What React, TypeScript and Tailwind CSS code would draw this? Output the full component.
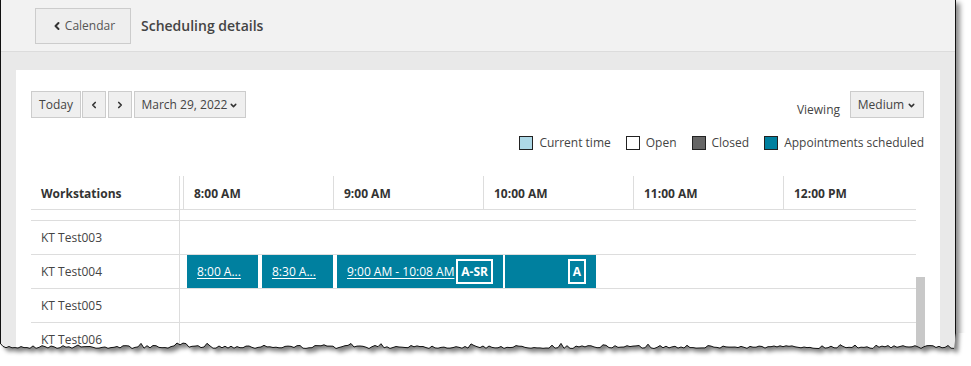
import { ChevronDown, ChevronLeft, ChevronRight } from "lucide-react";

const HOURS = ["8:00 AM", "9:00 AM", "10:00 AM", "11:00 AM", "12:00 PM"];

const LEGEND = [
  { label: "Current time", swatch: "bg-[#add8e6]" },
  { label: "Open", swatch: "bg-white" },
  { label: "Closed", swatch: "bg-[#666666]" },
  { label: "Appointments scheduled", swatch: "bg-[#00809f]" },
];

// jagged paper edge, seeded so it is the same every render
function tornPath() {
  let seed = 7;
  const rnd = () => {
    seed = (seed * 16807) % 2147483647;
    return (seed - 1) / 2147483646;
  };
  const pts: string[] = [];
  for (let x = 0; x <= 956; x += 3) {
    let y = 14 + (rnd() - 0.5) * 3;
    if (rnd() > 0.9) y -= 2.5;
    pts.push(`${x},${y.toFixed(1)}`);
  }
  return pts;
}

function TornEdge() {
  const pts = tornPath();
  const line = "M" + pts.join(" L");
  const below = `${line} L956,0 L971,0 L971,40 L0,40 Z`;
  const paper = `M0,-20 L${pts.join(" L")} L956,-20 Z`;
  return (
    <svg
      className="absolute left-0 top-[333px]"
      width="971"
      height="33"
      viewBox="0 0 971 33"
    >
      <defs>
        <filter id="blur" x="-5%" y="-100%" width="110%" height="300%">
          <feGaussianBlur stdDeviation="2.2" />
        </filter>
        <clipPath id="below">
          <path d={below} />
        </clipPath>
      </defs>
      <path d={below} fill="#ffffff" />
      <g clipPath="url(#below)">
        <path
          d={paper}
          fill="rgba(0,0,0,0.5)"
          filter="url(#blur)"
          transform="translate(4,4)"
        />
      </g>
      <path d={line} fill="none" stroke="#111" strokeWidth="1" />
    </svg>
  );
}

function Btn({ children, className = "" }: { children: React.ReactNode; className?: string }) {
  return (
    <button
      className={`h-[27px] flex items-center justify-center border border-[#cccccc] bg-[#efefef] text-[12px] text-[#444] shrink-0 ${className}`}
    >
      {children}
    </button>
  );
}

function Appt({ w, ml, text, tag }: { w: number; ml: number; text?: string; tag?: string }) {
  return (
    <div
      className="h-[33px] bg-[#00809f] flex items-center justify-between pl-[10px] pr-[10px] text-white shrink-0 whitespace-nowrap"
      style={{ width: w, marginLeft: ml }}
    >
      <span className="text-[12px] underline underline-offset-2">{text}</span>
      {tag && (
        <span className="border-2 border-white h-[25px] px-[3px] flex items-center text-[12px] font-bold">
          {tag}
        </span>
      )}
    </div>
  );
}

function Row({ name, children, h = 33 }: { name: string; children?: React.ReactNode; h?: number }) {
  return (
    <div className="flex border-b border-[#dddddd]" style={{ height: h + 1 }}>
      <div className="w-[149px] border-r border-[#dddddd] pl-[10px] flex items-center text-[12px] text-[#444]">
        {name}
      </div>
      <div className="flex-1 flex items-start">{children}</div>
    </div>
  );
}

export default function App() {
  return (
    <div className="relative w-[971px] h-[366px] bg-white overflow-hidden font-['Open_Sans',sans-serif]">
      <div className="w-[956px] h-[350px] border-l border-r border-[#111] bg-[#e9e9e9] overflow-hidden shadow-[4px_3px_5px_rgba(0,0,0,0.45)]">
        {/* Header */}
        <div className="h-[52px] bg-[#f2f2f2] border-b border-[#dcdcdc] flex items-center pl-[34px]">
          <button className="h-[36px] w-[96px] border border-[#cccccc] bg-[#eeeeee] flex items-center justify-center gap-[2px] text-[12px] text-[#555]">
            <ChevronLeft size={12} strokeWidth={4} className="text-[#333]" />
            Calendar
          </button>
          <span className="ml-[10px] text-[14px] font-semibold text-[#444]">Scheduling details</span>
        </div>

        {/* Body */}
        <div className="pl-[15px] pt-[18px]">
          <div className="w-[924px] bg-white pl-[15px] pr-[15px] pt-[21px] h-[300px]">
            <div className="flex justify-between">
              <div className="flex">
                <Btn className="w-[50px]">Today</Btn>
                <Btn className="w-[24px] ml-[1px]">
                  <ChevronLeft size={10} strokeWidth={4} className="text-[#333]" />
                </Btn>
                <Btn className="w-[24px] ml-[2px]">
                  <ChevronRight size={10} strokeWidth={4} className="text-[#333]" />
                </Btn>
                <Btn className="w-[112px] ml-[2px] gap-[2px]">
                  March 29, 2022
                  <ChevronDown size={9} strokeWidth={4} className="text-[#333] mt-[1px]" />
                </Btn>
              </div>
              <div className="flex items-end gap-[10px] pr-px">
                <span className="text-[12px] text-[#444] leading-[18px] mb-[-1px]">Viewing</span>
                <Btn className="w-[74px] gap-[3px]">
                  Medium
                  <ChevronDown size={9} strokeWidth={4} className="text-[#333] mt-[1px]" />
                </Btn>
              </div>
            </div>

            <div className="flex justify-end gap-[15px] mt-[16px] pr-px">
              {LEGEND.map((l) => (
                <div key={l.label} className="flex items-center gap-[6px] text-[12px] text-[#444] leading-[18px]">
                  <span className={`w-[14px] h-[14px] border border-[#222] ${l.swatch}`} />
                  {l.label}
                </div>
              ))}
            </div>

            {/* Table */}
            <div className="flex mt-[24px]">
              <div className="w-[885px]">
                <div className="flex h-[34px] border-b border-[#dddddd]">
                  <div className="w-[149px] border-r border-[#dddddd] pl-[10px] pt-[2px] flex items-center text-[12px] font-bold text-[#333]">
                    Workstations
                  </div>
                  <div className="w-[3px]" />
                  {HOURS.map((h, i) => (
                    <div
                      key={h}
                      className={`border-l border-[#dddddd] pl-[10px] pt-[2px] flex items-center text-[12px] font-bold text-[#333] ${
                        i === 4 ? "w-[132px]" : "w-[150px]"
                      }`}
                    >
                      {h}
                    </div>
                  ))}
                </div>
                <Row name="" h={10} />
                <Row name="KT Test003" />
                <Row name="KT Test004">
                  <Appt w={71} ml={7} text="8:00 A..." />
                  <Appt w={71} ml={4} text="8:30 A..." />
                  <Appt w={166} ml={4} text="9:00 AM - 10:08 AM" tag="A-SR" />
                  <Appt w={91} ml={2} tag="A" />
                </Row>
                <Row name="KT Test005" />
                <Row name="KT Test006" />
              </div>
              <div className="w-[9px] pt-[101px]">
                <div className="h-[80px] bg-[#c8c8c8]" />
              </div>
            </div>
          </div>
        </div>
      </div>
      <TornEdge />
    </div>
  );
}
